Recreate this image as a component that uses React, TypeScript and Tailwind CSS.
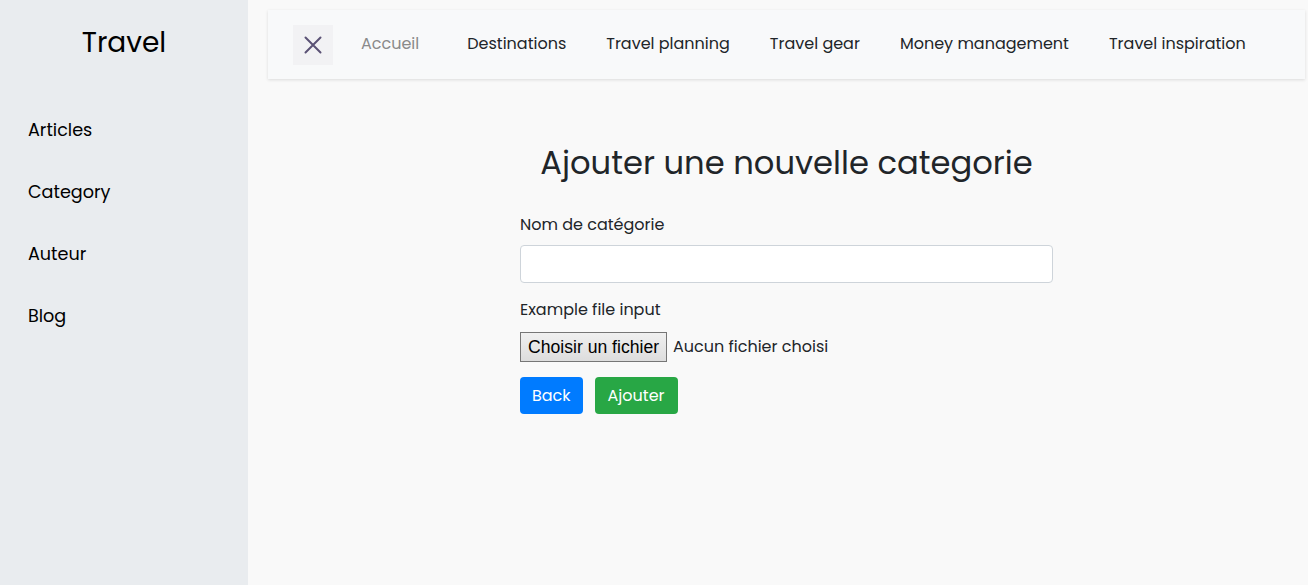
const SIDE_LINKS = ['Articles', 'Category', 'Auteur', 'Blog'];
const NAV_LINKS = ['Destinations', 'Travel planning', 'Travel gear', 'Money management', 'Travel inspiration'];

export default function App() {
  return (
    <div className="flex h-[585px] w-[1308px] overflow-hidden bg-[#f9f9f9] font-['Poppins','DejaVu_Sans',sans-serif] text-[#212529]">
      <aside className="w-[248px] shrink-0 bg-[#e9ecef]">
        <div className="flex h-[82px] items-center justify-center pt-[3px] text-[28px] text-black">Travel</div>
        <nav className="flex flex-col pt-[17px]">
          {SIDE_LINKS.map((l) => (
            <a key={l} href="#" className="flex h-[62px] items-center pl-[28px] text-[17.6px] text-black">
              {l}
            </a>
          ))}
        </nav>
      </aside>

      <main className="flex-1 pl-5 pr-[3px] pt-[10px]">
        <div className="flex h-[69px] items-center bg-[#f8f9fa] px-[25px] shadow-[0_1px_3px_rgba(0,0,0,0.12)]">
          <button className="flex h-10 w-10 items-center justify-center bg-[#f2f2f4] text-[#5b5275]">
            <svg width="18" height="18" viewBox="0 0 18 18" fill="none" stroke="currentColor" strokeWidth="2" strokeLinecap="round">
              <path d="M1.5 1.5 16.5 16.5M16.5 1.5 1.5 16.5" />
            </svg>
          </button>
          <a href="#" className="mb-[2px] ml-[28px] text-[16px] text-[#8a8a8a]">Accueil</a>
          <div className="mb-[2px] ml-[48px] flex gap-10">
            {NAV_LINKS.map((l) => (
              <a key={l} href="#" className="text-[16px] text-[#212529]">
                {l}
              </a>
            ))}
          </div>
        </div>

        <div className="mx-auto mt-[64px] w-[533px]">
          <h1 className="text-center text-[32.2px] leading-[40px] whitespace-nowrap">Ajouter une nouvelle categorie</h1>
          <form className="mt-[30px]">
            <label className="block text-[16px] leading-[24px]">Nom de catégorie</label>
            <input type="text" className="mt-[8px] block h-[38px] w-full rounded border border-[#ced4da] bg-white px-3" />
            <label className="mt-[15px] block text-[16px] leading-[24px]">Example file input</label>
            <div className="mt-[10px] flex h-[30px] items-center">
              <span className="flex h-[30px] items-center border border-[#767676] bg-gradient-to-b from-[#f0f0f0] to-[#dddddd] px-[7px] font-['Liberation_Sans',Arial,sans-serif] text-[17.6px] text-black">
                Choisir un fichier
              </span>
              <span className="ml-[6px] text-[16px]">Aucun fichier choisi</span>
            </div>
            <div className="mt-[15px] flex gap-3">
              <button type="button" className="h-[37px] rounded bg-[#007bff] px-[12px] text-[16px] text-white">Back</button>
              <button type="button" className="h-[37px] rounded bg-[#28a745] px-[13px] text-[16px] text-white">Ajouter</button>
            </div>
          </form>
        </div>
      </main>
    </div>
  );
}
